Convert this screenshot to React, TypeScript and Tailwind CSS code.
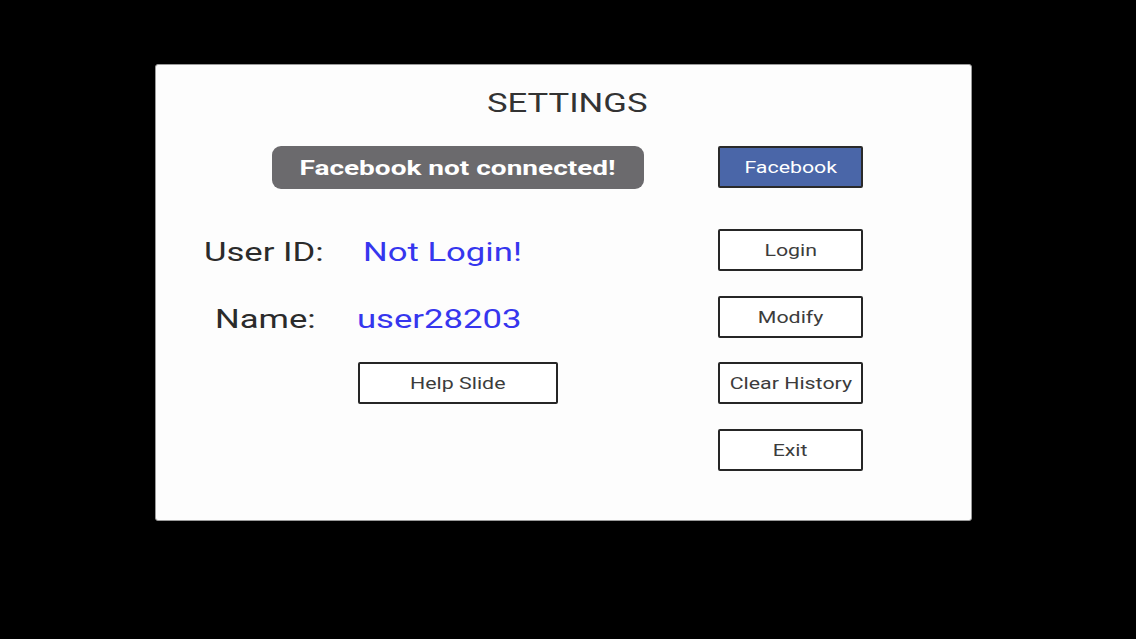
import React from "react";

const S = ({ children, className = "" }: { children: React.ReactNode; className?: string }) => (
  <span className={"inline-block scale-x-[1.333] whitespace-nowrap " + className}>{children}</span>
);

const Btn = ({ label, className = "" }: { label: string; className?: string }) => (
  <div
    className={
      "flex h-[42px] w-[145px] items-center justify-center rounded-[2px] border-2 border-[#262626] bg-white pt-[2px] text-[16px] text-[#3c3c3c] " +
      className
    }
  >
    <S>{label}</S>
  </div>
);

export default function App() {
  return (
    <div
      className="min-h-[639px] w-[1136px] bg-black pt-[64px] pl-[155px]"
      style={{ fontFamily: "Roboto, 'Liberation Sans', sans-serif" }}
    >
      <div className="flex h-[457px] w-[817px] flex-col rounded-[3px] border border-[#9a9a9a] bg-[#fdfdfd]">
        <div className="mt-[23px] flex h-[30px] items-center justify-center pl-[8px] text-[26px] leading-none text-[#333]">
          <S>SETTINGS</S>
        </div>

        <div className="mt-[28px] flex h-[43px]">
          <div className="w-[562px]">
            <div className="ml-[116px] flex h-[43px] w-[372px] items-center justify-center rounded-[9px] bg-[#6b6a6d] pt-[2px] text-[21px] font-bold text-white">
              <S>Facebook not connected!</S>
            </div>
          </div>
          <div className="flex h-[42px] w-[145px] items-center justify-center rounded-[2px] border-2 border-[#2a2a2a] bg-[#4a66a8] pt-[2px] text-[16px] text-white">
            <S>Facebook</S>
          </div>
        </div>

        <div className="mt-[40px] flex h-[42px]">
          <div className="flex w-[562px] items-center pt-[4px] pl-[48px] text-[26px]">
            <div className="w-[159px]">
              <S className="origin-left text-[#2b2b2b]">User ID:</S>
            </div>
            <S className="origin-left text-[#3636ee]">Not Login!</S>
          </div>
          <Btn label="Login" />
        </div>

        <div className="mt-[25px] flex h-[42px]">
          <div className="flex w-[562px] items-center pt-[4px] pl-[59px] text-[26px]">
            <div className="w-[142px]">
              <S className="origin-left text-[#2b2b2b]">Name:</S>
            </div>
            <S className="origin-left text-[#3636ee]">user28203</S>
          </div>
          <Btn label="Modify" />
        </div>

        <div className="mt-[24px] flex h-[42px]">
          <div className="w-[562px]">
            <Btn label="Help Slide" className="ml-[202px] w-[200px]" />
          </div>
          <Btn label="Clear History" />
        </div>

        <div className="mt-[25px] flex h-[42px]">
          <div className="w-[562px]" />
          <Btn label="Exit" />
        </div>
      </div>
    </div>
  );
}
